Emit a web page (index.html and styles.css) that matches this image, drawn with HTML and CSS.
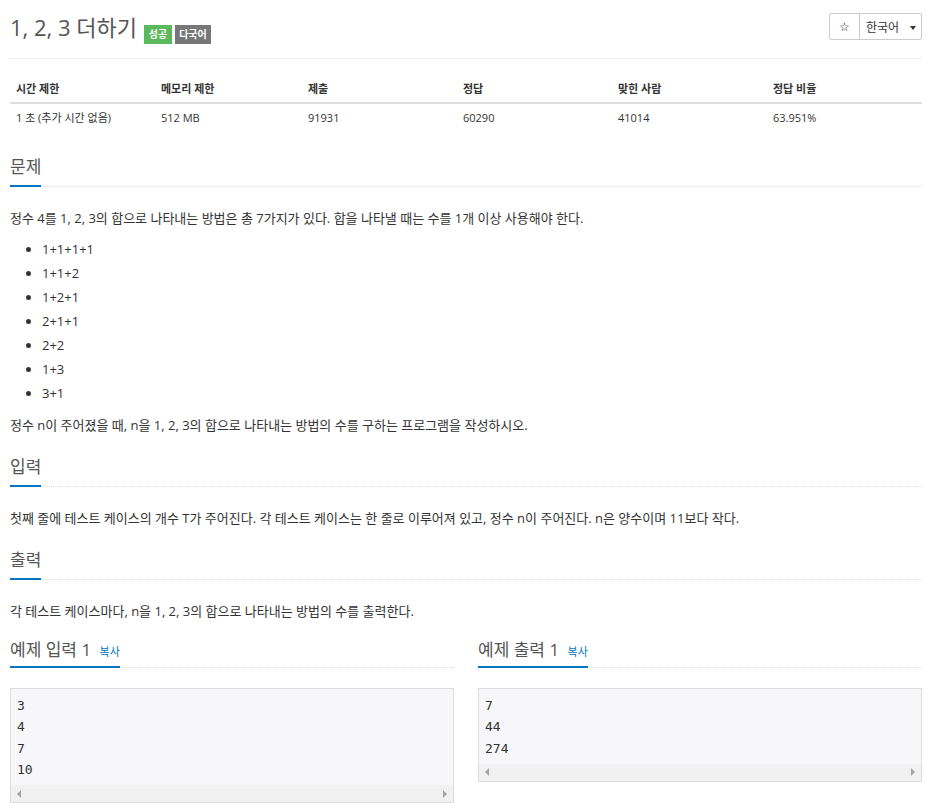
FILE: index.html
```html
<!DOCTYPE html>
<html lang="ko">

<head>
  <meta charset="UTF-8" />
  <meta name="viewport" content="width=device-width, initial-scale=1.0" />
  <title>1, 2, 3 더하기</title>
  <link rel="stylesheet" href="styles.css">
</head>

<body>
  <div class="page">
    <div class="page-header">
      <h1 class="title">
        1, 2, 3 더하기
        <span class="label label-success">성공</span><span class="label label-default">다국어</span>
      </h1>
      <div class="btn-group">
        <button class="btn btn-star">&#9734;</button>
        <button class="btn btn-lang">한국어 <span class="caret"></span></button>
      </div>
    </div>

    <table class="problem-info">
      <colgroup>
        <col style="width: 145px">
        <col style="width: 147px">
        <col style="width: 155px">
        <col style="width: 155px">
        <col style="width: 155px">
        <col style="width: 155px">
      </colgroup>
      <thead>
        <tr>
          <th>시간 제한</th>
          <th>메모리 제한</th>
          <th>제출</th>
          <th>정답</th>
          <th>맞힌 사람</th>
          <th>정답 비율</th>
        </tr>
      </thead>
      <tbody>
        <tr>
          <td>1 초 (추가 시간 없음)</td>
          <td>512 MB</td>
          <td>91931</td>
          <td>60290</td>
          <td>41014</td>
          <td>63.951%</td>
        </tr>
      </tbody>
    </table>

    <section class="problem-section">
      <div class="headline">
        <h2>문제</h2>
      </div>
      <div class="problem-text">
        <p>정수 4를 1, 2, 3의 합으로 나타내는 방법은 총 7가지가 있다. 합을 나타낼 때는 수를 1개 이상 사용해야 한다.</p>
        <ul>
          <li>1+1+1+1</li>
          <li>1+1+2</li>
          <li>1+2+1</li>
          <li>2+1+1</li>
          <li>2+2</li>
          <li>1+3</li>
          <li>3+1</li>
        </ul>
        <p>정수 n이 주어졌을 때, n을 1, 2, 3의 합으로 나타내는 방법의 수를 구하는 프로그램을 작성하시오.</p>
      </div>
    </section>

    <section class="problem-section">
      <div class="headline">
        <h2>입력</h2>
      </div>
      <div class="problem-text">
        <p>첫째 줄에 테스트 케이스의 개수 T가 주어진다. 각 테스트 케이스는 한 줄로 이루어져 있고, 정수 n이 주어진다. n은 양수이며 11보다 작다.</p>
      </div>
    </section>

    <section class="problem-section">
      <div class="headline">
        <h2>출력</h2>
      </div>
      <div class="problem-text">
        <p>각 테스트 케이스마다, n을 1, 2, 3의 합으로 나타내는 방법의 수를 출력한다.</p>
      </div>
    </section>

    <div class="samples">
      <section class="problem-section">
        <div class="headline">
          <h2>예제 입력 1 <a class="copy" href="#">복사</a></h2>
        </div>
        <div class="sample-box">
          <pre class="sampledata">3
4
7
10</pre>
          <div class="hscroll"><span class="arrow-left"></span><span class="arrow-right"></span></div>
        </div>
      </section>
      <section class="problem-section">
        <div class="headline">
          <h2>예제 출력 1 <a class="copy" href="#">복사</a></h2>
        </div>
        <div class="sample-box">
          <pre class="sampledata">7
44
274</pre>
          <div class="hscroll"><span class="arrow-left"></span><span class="arrow-right"></span></div>
        </div>
      </section>
    </div>
  </div>
</body>

</html>
```

FILE: styles.css
```css
* {
  box-sizing: border-box;
}

body {
  margin: 0;
  background: #fff;
  color: #333;
  font-family: "Open Sans", "Noto Sans CJK KR", sans-serif;
  font-size: 13px;
}

.page {
  padding: 0 17px 0 10px;
}

/* 제목 */
.page-header {
  display: flex;
  justify-content: space-between;
  align-items: flex-start;
  border-bottom: 1px solid #eee;
  padding-bottom: 14px;
}

.title {
  margin: 12px 0 0 0;
  font-size: 22px;
  line-height: 30px;
  font-weight: 400;
  color: #555;
}

.label {
  display: inline-block;
  font-size: 10px;
  font-weight: 700;
  line-height: 11px;
  padding: 4px 4px;
  color: #fff;
  vertical-align: -2px;
}

.label-success {
  background: #5cb85c;
  margin-left: 1px;
  padding: 4px 5px;
}

.label-default {
  background: #777;
  margin-left: 3px;
}

.btn-group {
  display: flex;
  margin-top: 13px;
}

.btn {
  appearance: none;
  height: 27px;
  border: 1px solid #ccc;
  background: #fff;
  color: #333;
  font-family: inherit;
  font-size: 12px;
  padding: 0;
  cursor: pointer;
}

.btn-star {
  width: 31px;
  font-size: 12px;
  font-family: "DejaVu Sans", sans-serif;
  color: #222;
  border-radius: 2px 0 0 2px;
}

.btn-lang {
  width: 63px;
  margin-left: -1px;
  border-radius: 0 2px 2px 0;
  padding-left: 1px;
}

.caret {
  display: inline-block;
  width: 0;
  height: 0;
  margin-left: 8px;
  vertical-align: middle;
  border-top: 4px solid #333;
  border-left: 3px solid transparent;
  border-right: 3px solid transparent;
}

/* 문제 정보 표 */
.problem-info {
  width: 100%;
  table-layout: fixed;
  border-collapse: collapse;
  margin-top: 14px;
  font-size: 11px;
}

.problem-info th {
  text-align: left;
  font-weight: 700;
  line-height: 15px;
  padding: 8px 6px 6px;
  border-bottom: 2px solid #ddd;
}

.problem-info td {
  line-height: 15px;
  padding: 6px;
}

/* 문제 본문 */
.problem-section {
  margin-top: 24px;
}

.problem-section + .problem-section {
  margin-top: 19px;
}

.samples {
  margin-top: 16px;
}

.samples .problem-section {
  margin-top: 0;
}

.headline {
  border-bottom: 1px dotted #ddd;
  margin-bottom: 20px;
}

.headline h2 {
  display: inline-block;
  margin: 0 0 -1px 0;
  font-size: 17px;
  line-height: 24px;
  font-weight: 400;
  color: #555;
  padding-bottom: 6px;
  border-bottom: 2px solid #0076c0;
}

.samples .headline h2 {
  padding-bottom: 4px;
}

.copy {
  font-size: 11px;
  line-height: 1;
  color: #0076c0;
  text-decoration: none;
  margin-left: 4px;
}

.problem-text p {
  margin: 0 0 9px 0;
  line-height: 22px;
}

.problem-text ul {
  margin: 0 0 10px 0;
  padding-left: 32px;
}

.problem-text li {
  line-height: 22px;
  margin-bottom: 2px;
}

/* 예제 */
.samples {
  display: grid;
  grid-template-columns: 1fr 1fr;
  gap: 24px;
}

.sample-box {
  border: 1px solid #ddd;
  background: #f7f7f9;
}

.sampledata {
  margin: 0;
  padding: 6px 6px 5px;
  font-family: "DejaVu Sans Mono", monospace;
  font-size: 13px;
  line-height: 21.33px;
  color: #333;
}

.hscroll {
  height: 17px;
  background: #f1f1f1;
  display: flex;
  justify-content: space-between;
  align-items: center;
  padding: 0 6px;
}

.arrow-left,
.arrow-right {
  width: 0;
  height: 0;
  border-top: 4px solid transparent;
  border-bottom: 4px solid transparent;
}

.arrow-left {
  border-right: 4px solid #a3a3a3;
}

.arrow-right {
  border-left: 4px solid #a3a3a3;
}
```
